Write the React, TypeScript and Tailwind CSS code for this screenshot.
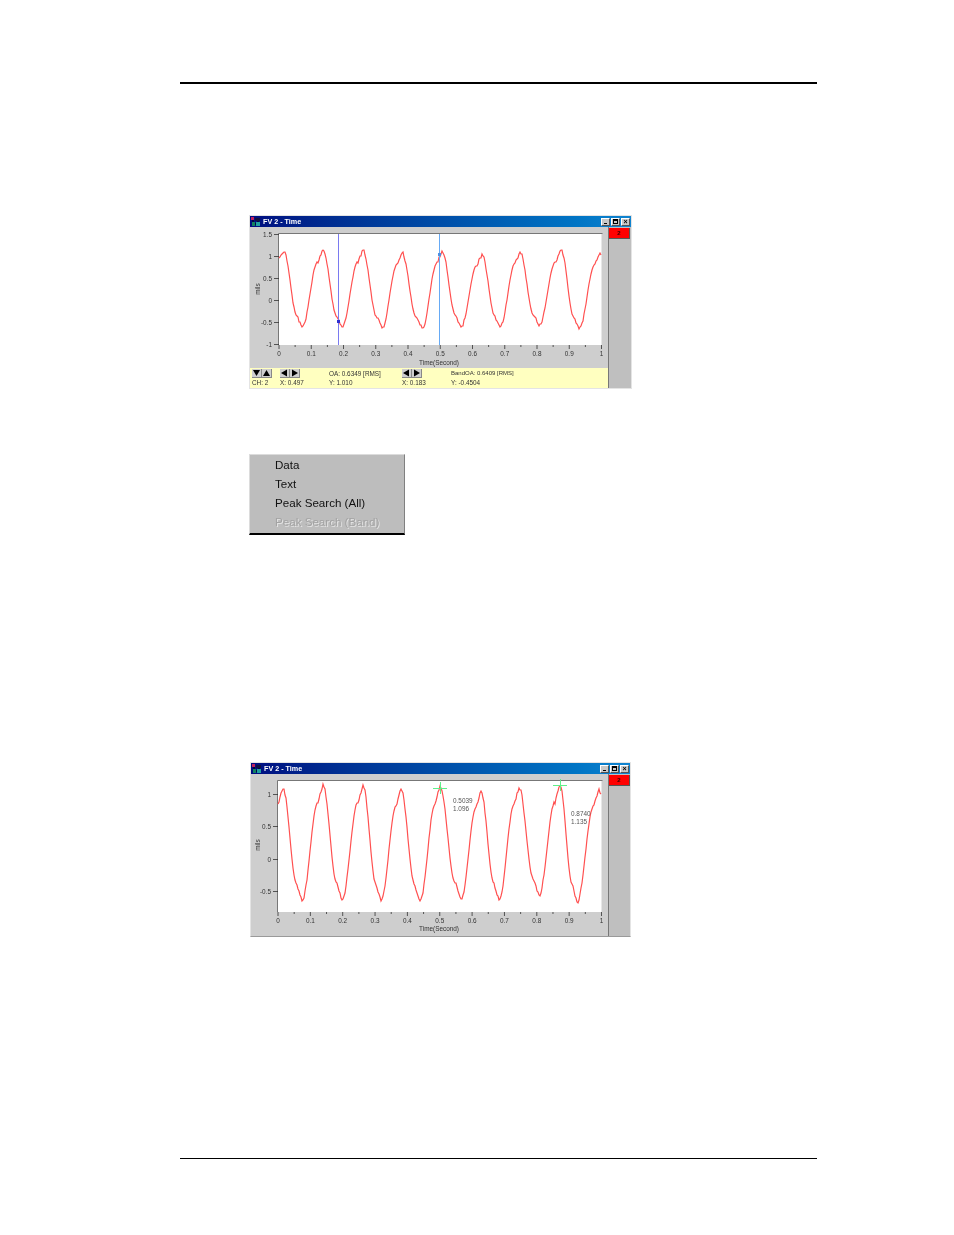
const hash = (n: number) => {
  const s = Math.sin(n * 12.9898) * 43758.5453;
  return s - Math.floor(s);
};

// extremes of the trace as [x pixel, value]
function wavePoints(ext: number[][], toY: (v: number) => number, seed: number, noise: number) {
  const pts: string[] = [];
  for (let i = 0; i < ext.length - 1; i++) {
    const [x0, a] = ext[i];
    const [x1, b] = ext[i + 1];
    const falling = b < a;
    for (let x = x0; x < x1; x++) {
      const t = (x - x0) / (x1 - x0);
      const k = falling ? 0.72 : 0.76;
      const e = t < k ? (0.85 * (1 - Math.cos((Math.PI * t) / k))) / 2 : 0.85 + (0.15 * (t - k)) / (1 - k);
      // jitter is strongest around the peaks and troughs, flat parts of the trace stay cleaner
      const edge = Math.abs(t - 0.5) > 0.25 ? 1 : 0.35;
      const wobble = t === 0 ? 0 : (hash(x + seed) - 0.5) * noise * edge;
      pts.push(`${x},${Math.round(toY(a + (b - a) * e) + wobble)}`);
    }
  }
  const last = ext[ext.length - 1];
  pts.push(`${last[0]},${Math.round(toY(last[1]))}`);
  return pts.join(" ");
}

const topExt = [
  [279, 0.95], [284, 1.1], [302, -0.62], [323, 1.15], [342, -0.62], [363, 1.14], [382, -0.65], [402, 1.08],
  [422, -0.65], [442, 1.12], [461, -0.62], [482, 1.05], [500, -0.62], [520, 1.1], [539, -0.6], [561, 1.15],
  [579, -0.67], [600, 1.08], [601, 1.03],
];
const bottomExt = [
  [278, 0.85], [283, 1.08], [302, -0.64], [323, 1.15], [342, -0.63], [363, 1.14], [381, -0.65], [401, 1.08],
  [420, -0.65], [440, 1.12], [461, -0.62], [481, 1.05], [499, -0.63], [519, 1.1], [539, -0.56], [560, 1.13],
  [577, -0.66], [599, 1.08], [601, 1.0],
];

const xLabels = ["0", "0.1", "0.2", "0.3", "0.4", "0.5", "0.6", "0.7", "0.8", "0.9", "1"];

function Chart(props: {
  viewBox: string;
  height: number;
  left: number;
  top: number;
  bottom: number;
  yTicks: [string, number][];
  ext: number[][];
  toY: (v: number) => number;
  seed: number;
  labelY: number;
  titleY: number;
  mils: number;
  children?: React.ReactNode;
}) {
  const { left, top, bottom } = props;
  const right = 601.5;
  const step = (right - left) / 20;
  return (
    <svg viewBox={props.viewBox} width={358} height={props.height} className="block">
      <rect x={left} y={top} width={right - left} height={bottom - top} fill="#ffffff" />
      <path d={`M${left - 0.5} ${bottom}V${top - 0.5}H${right + 1}`} stroke="#777777" fill="none" />
      {props.yTicks.map(([label, y]) => (
        <g key={label}>
          <path d={`M${left - 5} ${y + 0.5}H${left}`} stroke="#333333" strokeWidth={0.8} />
          <text x={left - 7} y={y + 2.5} textAnchor="end" fontSize={6.4} fill="#333333">
            {label}
          </text>
        </g>
      ))}
      {Array.from({ length: 21 }, (_, i) => (
        <path
          key={i}
          d={`M${left + i * step} ${bottom}v${i % 2 === 0 ? 4 : 2}`}
          stroke="#333333"
          strokeWidth={0.8}
        />
      ))}
      {xLabels.map((label, i) => (
        <text key={label} x={left + i * 2 * step} y={props.labelY} textAnchor="middle" fontSize={6.4} fill="#333333">
          {label}
        </text>
      ))}
      <text x={439} y={props.titleY} textAnchor="middle" fontSize={6.4} fill="#333333">
        Time(Second)
      </text>
      <text
        x={260}
        y={props.mils}
        textAnchor="middle"
        fontSize={6.4}
        fill="#333333"
        transform={`rotate(-90 260 ${props.mils})`}
      >
        mils
      </text>
      <polyline
        points={wavePoints(props.ext, props.toY, props.seed, 3.4)}
        fill="none"
        stroke="#ff5050"
        strokeWidth={1.2}
      />
      {props.children}
    </svg>
  );
}

function AppIcon() {
  return (
    <svg width="10" height="10" viewBox="0 0 10 10" className="shrink-0">
      <rect x="0" y="0" width="3" height="3" fill="#c02060" />
      <rect x="4" y="1" width="5" height="3" fill="#101040" />
      <rect x="1" y="5" width="3" height="4" fill="#108060" />
      <rect x="5" y="5" width="4" height="4" fill="#20a0a0" />
      <path d="M2 3v2M7 4v1M4 7h1" stroke="#000000" />
    </svg>
  );
}

function CtlButton({ children }: { children: React.ReactNode }) {
  return (
    <div className="w-[9px] h-[8px] bg-[#c8c8c8] border-t border-l border-t-white border-l-white border-r border-b border-r-[#555555] border-b-[#555555] flex items-center justify-center">
      {children}
    </div>
  );
}

function TitleBar() {
  return (
    <div className="h-[11px] flex items-center pl-[1px] pr-[1px] bg-gradient-to-r from-[#000c80] to-[#1084d0]">
      <AppIcon />
      <span className="ml-[2px] text-[7.2px] leading-none font-bold text-white">FV 2 - Time</span>
      <div className="ml-auto flex gap-[1px]">
        <CtlButton>
          <div className="w-[3px] h-[1px] bg-black mt-[4px] mr-[1px]" />
        </CtlButton>
        <CtlButton>
          <div className="w-[5px] h-[5px] border border-black border-t-2" />
        </CtlButton>
        <CtlButton>
          <span className="text-[7px] leading-none font-bold text-black">×</span>
        </CtlButton>
      </div>
    </div>
  );
}

function SidePanel() {
  return (
    <div className="flex-1 bg-[#bfbfbf] border-l border-l-[#777777]">
      <div className="h-[11px] mt-[1px] w-[21px] bg-[#ff0000] border-b border-r border-[#555555] flex items-center justify-center text-[6px] leading-none font-bold text-[#300000]">
        2
      </div>
    </div>
  );
}

function Arrow({ d }: { d: string }) {
  return (
    <div className="w-[10px] h-[9px] bg-[#cfcfcf] border-r border-b border-[#888888]">
      <svg width="9" height="8" viewBox="0 0 9 8" className="block">
        <path d={d} fill="#000000" />
      </svg>
    </div>
  );
}

function ArrowPair({ first, second }: { first: string; second: string }) {
  return (
    <div className="flex">
      <Arrow d={first} />
      <Arrow d={second} />
    </div>
  );
}

const DOWN = "M1 1H8L4.5 7Z";
const UP = "M1 7H8L4.5 1Z";
const LEFT = "M7 0.5V7.5L1 4Z";
const RIGHT = "M2 0.5V7.5L8 4Z";

function StatusBar() {
  return (
    <div className="h-[20px] bg-[#ffffc0] pl-[2px] pt-[1px] grid grid-cols-[28px_49px_73px_49px_1fr] grid-rows-[9px_9px] text-[6.4px] leading-[9px] text-[#333333] whitespace-nowrap">
      <ArrowPair first={DOWN} second={UP} />
      <ArrowPair first={LEFT} second={RIGHT} />
      <div>OA: 0.6349 [RMS]</div>
      <ArrowPair first={LEFT} second={RIGHT} />
      <div className="text-[6px]">BandOA: 0.6409 [RMS]</div>
      <div>CH: 2</div>
      <div>X: 0.497</div>
      <div>Y: 1.010</div>
      <div>X: 0.183</div>
      <div>Y: -0.4504</div>
    </div>
  );
}

function Cross({ x, y }: { x: number; y: number }) {
  return <path d={`M${x - 7} ${y + 0.5}H${x + 7}M${x + 0.5} ${y - 6}V${y + 6}`} stroke="#5ff08a" strokeWidth={1} />;
}

function Note({ x, y, lines }: { x: number; y: number; lines: string[] }) {
  return (
    <text x={x} y={y} fontSize={6.4} fill="#555555">
      {lines[0]}
      <tspan x={x} dy={8}>
        {lines[1]}
      </tspan>
    </text>
  );
}

function MenuItem({ label, disabled }: { label: string; disabled?: boolean }) {
  return (
    <div
      className={`h-[19px] pl-[25px] text-[11.6px] leading-[19px] ${
        disabled ? "text-[#a3a3a3] [text-shadow:1px_1px_0_#e4e4e4]" : "text-[#111111]"
      }`}
    >
      {label}
    </div>
  );
}

export default function App() {
  const y1 = (v: number) => 300 - v * 43.7;
  const y2 = (v: number) => 859 - v * 65;

  return (
    <div className="w-[954px] h-[1235px] bg-white pt-[82px] pl-[180px] font-['Liberation_Sans',Arial,sans-serif]">
      <div className="w-[637px] h-[2px] bg-black" />

      {/* first time plot with cursors */}
      <div className="mt-[131px] ml-[69px] w-[383px] h-[174px] border border-[#e4e4e4] bg-[#cecece] blur-[0.3px]">
        <TitleBar />
        <div className="flex h-[161px]">
          <div className="w-[358px]">
            <Chart
              viewBox="250 227 358 141"
              height={141}
              left={279}
              top={234}
              bottom={345}
              yTicks={[["1.5", 234], ["1", 256], ["0.5", 278], ["0", 300], ["-0.5", 322], ["-1", 344]]}
              ext={topExt}
              toY={y1}
              seed={3}
              labelY={356}
              titleY={365}
              mils={289}
            >
              <path d="M338.5 234V345" stroke="#7a7af0" />
              <path d="M439.5 234V345" stroke="#66aaf5" />
              <rect x="337" y="320" width="3" height="3" fill="#3030d0" />
              <rect x="438" y="253" width="3" height="3" fill="#5090e0" />
            </Chart>
            <StatusBar />
          </div>
          <SidePanel />
        </div>
      </div>

      {/* context menu */}
      <div className="mt-[65px] ml-[69px] w-[156px] h-[81px] bg-[#bdbdbd] border-t border-l border-t-[#dcdcdc] border-l-[#dcdcdc] border-r border-r-[#808080] border-b-2 border-b-black blur-[0.3px]">
        <MenuItem label="Data" />
        <MenuItem label="Text" />
        <MenuItem label="Peak Search (All)" />
        <MenuItem label="Peak Search (Band)" disabled />
      </div>

      {/* second time plot with peak markers */}
      <div className="mt-[227px] ml-[70px] w-[381px] h-[175px] border border-[#e4e4e4] border-b-[#9a9a9a] border-r-[#e4e4e4] bg-[#cecece] blur-[0.3px]">
        <TitleBar />
        <div className="flex h-[162px]">
          <div className="w-[357px] overflow-hidden">
            <Chart
              viewBox="251 774 358 162"
              height={162}
              left={278}
              top={781}
              bottom={912}
              yTicks={[["1", 794], ["0.5", 826], ["0", 859], ["-0.5", 891]]}
              ext={bottomExt}
              toY={y2}
              seed={11}
              labelY={923}
              titleY={931}
              mils={845}
            >
              <Cross x={440} y={788} />
              <Cross x={560} y={785} />
              <Note x={453} y={803} lines={["0.5039", "1.096"]} />
              <Note x={571} y={816} lines={["0.8740", "1.135"]} />
            </Chart>
          </div>
          <SidePanel />
        </div>
      </div>

      <div className="mt-[221px] w-[637px] h-[1px] bg-black" />
    </div>
  );
}
